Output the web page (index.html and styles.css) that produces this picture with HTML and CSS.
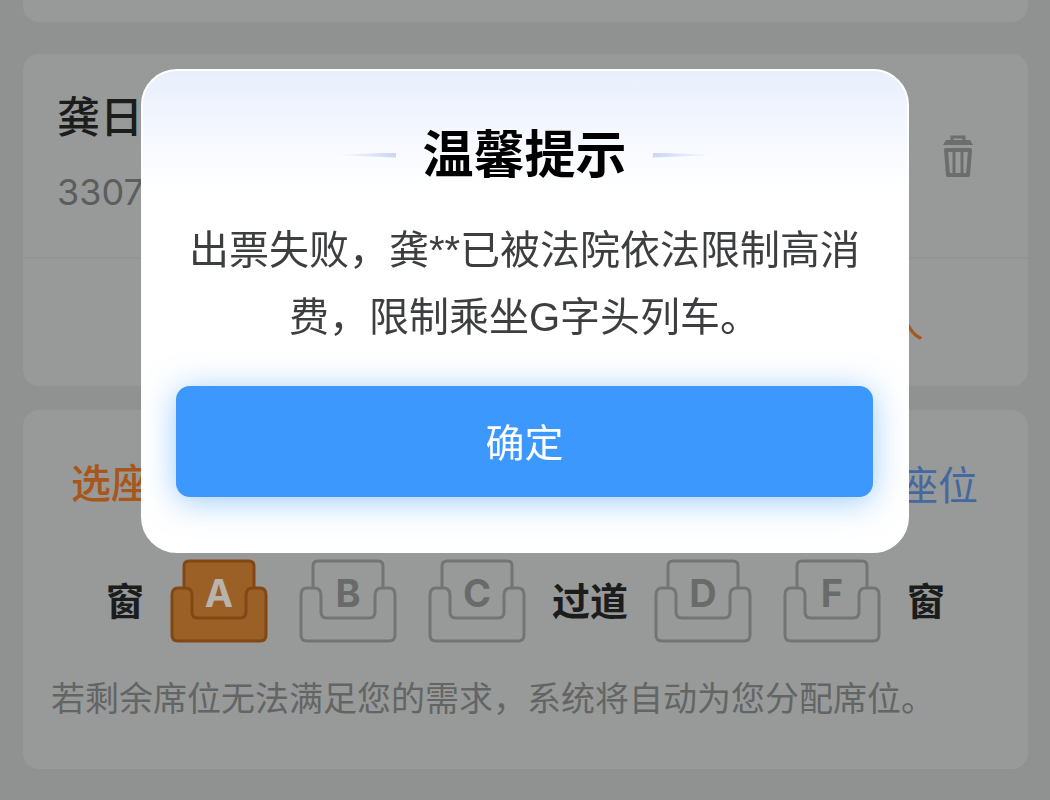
FILE: index.html
```html
<!DOCTYPE html>
<html lang="zh-CN">
<head>
<meta charset="utf-8">
<meta name="viewport" content="width=device-width, initial-scale=1">
<title>温馨提示</title>
<link rel="stylesheet" href="styles.css">
</head>
<body>
<svg class="defs" width="0" height="0" aria-hidden="true">
  <symbol id="seat" viewBox="0 0 98 84">
    <path d="M14 29V7Q14 2 19 2H79Q84 2 84 7V29L76 53Q76 59 70 59H28Q22 59 22 53Z" stroke="none"/>
    <path d="M14 29V7Q14 2 19 2H79Q84 2 84 7V29"/>
    <path d="M8 29H15Q22 29 22 36V53Q22 59 28 59H70Q76 59 76 53V36Q76 29 83 29H90Q96 29 96 36V76Q96 82 90 82H8Q2 82 2 76V36Q2 29 8 29Z"/>
  </symbol>
</svg>
<main class="page">
  <section class="card card-top"></section>
  <section class="card passenger">
    <div class="passenger-info">
      <div>
        <h2 class="name">龚日</h2>
        <p class="id-number">3307</p>
      </div>
      <button class="delete" type="button" aria-label="删除">
        <svg width="30" height="42" viewBox="0 0 30 42">
          <path d="M9 6V2H21V6" fill="none" stroke="currentColor" stroke-width="3"/>
          <path d="M3 5H27L30 10H0Z" fill="currentColor"/>
          <path d="M3 15H27L25 40H5Z" fill="none" stroke="currentColor" stroke-width="4" stroke-linejoin="round"/>
          <path d="M11 15V40M19 15V40" fill="none" stroke="currentColor" stroke-width="3"/>
        </svg>
      </button>
    </div>
    <div class="passenger-add"><a class="add-link" href="#">人</a></div>
  </section>
  <section class="card seats">
    <div class="seats-head">
      <h2 class="seats-title">选座</h2>
      <a class="seats-link" href="#">座位</a>
    </div>
    <div class="seat-row">
      <span class="place">窗</span>
      <div class="seat-group">
        <button class="seat seat-on" type="button"><svg class="seat-icon"><use href="#seat"/></svg><span class="letter">A</span></button>
        <button class="seat" type="button"><svg class="seat-icon"><use href="#seat"/></svg><span class="letter">B</span></button>
        <button class="seat" type="button"><svg class="seat-icon"><use href="#seat"/></svg><span class="letter">C</span></button>
      </div>
      <span class="place">过道</span>
      <div class="seat-group">
        <button class="seat" type="button"><svg class="seat-icon"><use href="#seat"/></svg><span class="letter">D</span></button>
        <button class="seat" type="button"><svg class="seat-icon"><use href="#seat"/></svg><span class="letter">F</span></button>
      </div>
      <span class="place">窗</span>
    </div>
    <p class="note">若剩余席位无法满足您的需求，系统将自动为您分配席位。</p>
  </section>
</main>
<div class="overlay">
  <div class="modal" role="dialog" aria-modal="true" aria-labelledby="modal-title">
    <div class="modal-head">
      <span class="ray ray-left"></span>
      <h1 class="modal-title" id="modal-title">温馨提示</h1>
      <span class="ray ray-right"></span>
    </div>
    <p class="modal-text">出票失败，龚**已被法院依法限制高消费，限制乘坐G字头列车。</p>
    <button class="confirm" type="button">确定</button>
  </div>
</div>
</body>
</html>
```
FILE: styles.css
```css
* { box-sizing: border-box; }
body {
  margin: 0;
  background: #8f9291;
  color: #1b1c1c;
  font-family: Inter, "Noto Sans CJK SC", sans-serif;
}
h1, h2, p { margin: 0; }
a { text-decoration: none; }
button { padding: 0; border: 0; background: none; font-family: inherit; }
.defs { position: absolute; }

.page { padding: 0 22px 30px 23px; }
.card { border-radius: 16px; background: #989a99; }
.card-top { height: 22px; border-radius: 0 0 16px 16px; }

.passenger { margin-top: 32px; }
.passenger-info {
  display: flex;
  align-items: center;
  justify-content: space-between;
  height: 205px;
  padding: 0 55px 0 34px;
  border-bottom: 2px solid #939594;
}
.name { font-size: 43px; line-height: 64px; font-weight: 500; }
.id-number { margin: 21px 0 12px; color: #5c5e5d; font-size: 36px; line-height: 44px; }
.delete { height: 42px; color: #6c6e6d; }
.delete svg { display: block; }
.passenger-add {
  display: flex;
  align-items: center;
  justify-content: flex-end;
  height: 127px;
  padding-right: 104px;
}
.add-link { color: #a8571c; font-size: 40px; line-height: 60px; }

.seats { margin-top: 24px; padding: 42px 28px 44px; }
.seats-head {
  display: flex;
  align-items: flex-end;
  justify-content: space-between;
  padding: 0 22px 0 20px;
}
.seats-title { color: #a8571c; font-size: 40px; line-height: 64px; font-weight: 500; }
.seats-link { color: #44689f; font-size: 40px; line-height: 60px; }
.seat-row {
  display: flex;
  align-items: center;
  justify-content: center;
  gap: 26px;
  margin-top: 43px;
}
.place { font-size: 38px; line-height: 60px; font-weight: 700; white-space: nowrap; }
.seat-group { display: flex; gap: 31px; }
.seat { display: grid; color: #696b6a; }
.seat-icon {
  grid-area: 1 / 1;
  width: 98px;
  height: 84px;
  fill: none;
  stroke: #737574;
  stroke-width: 3px;
}
.letter { grid-area: 1 / 1; font-size: 38px; line-height: 68px; font-weight: 700; }
.seat-on { color: #b9b3ad; }
.seat-on .seat-icon { fill: #9b6025; stroke: #814816; }
.note { margin-top: 30px; color: #636564; font-size: 34px; line-height: 52px; }

.overlay {
  position: fixed;
  inset: 0;
  display: flex;
  align-items: flex-start;
  justify-content: center;
  padding: 69px 24px 24px;
}
.modal {
  width: 768px;
  padding: 50px 34px 54px 33px;
  border: 2px solid #fff;
  border-radius: 36px;
  background: linear-gradient(#e8effc, #f2f6fe 50px, #fff 118px) #fff;
}
.modal-head { display: flex; align-items: center; justify-content: center; gap: 26px; }
.modal-title { color: #000; font-size: 51px; line-height: 68px; font-weight: 700; }
.ray { width: 62px; height: 5px; }
.ray-left { background: linear-gradient(to right, #dfe6f800, #ccd6f3); clip-path: polygon(0 50%, 100% 0, 100% 100%); }
.ray-right { background: linear-gradient(to left, #dfe6f800, #ccd6f3); clip-path: polygon(0 0, 100% 50%, 0 100%); }
.modal-text {
  margin-top: 28px;
  color: #3d3e40;
  font-family: "Liberation Sans", "Noto Sans CJK SC", sans-serif;
  font-size: 40px;
  line-height: 67px;
  text-align: center;
}
.confirm {
  display: block;
  width: 100%;
  height: 111px;
  margin-top: 35px;
  padding-bottom: 4px;
  border-radius: 14px;
  background: #3c98fc;
  box-shadow: 0 4px 32px rgba(60, 152, 252, 0.5);
  color: #fff;
  font-size: 39px;
}
```
